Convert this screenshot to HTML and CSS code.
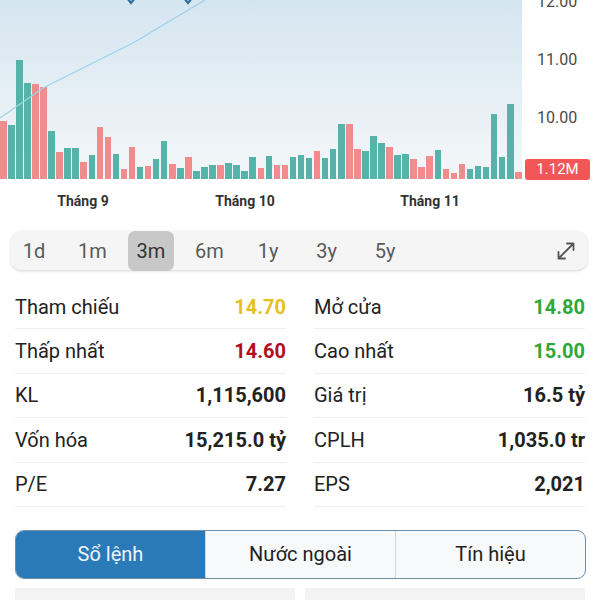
FILE: index.html
```html
<!DOCTYPE html>
<html lang="vi">
<head>
<meta charset="UTF-8">
<meta name="viewport" content="width=device-width, initial-scale=1.0">
<title>Chi tiết cổ phiếu</title>
<link rel="stylesheet" href="styles.css">
</head>
<body>

<div id="chart">
    <div class="chart-row">
        <div class="plot">
            <div class="bars" id="bars"></div>
            <svg class="overlay" width="522" height="179" viewBox="0 0 522 179">
                <polyline class="ma-line" points="0,118 43,88 133,43 205,0"/>
                <path class="price-line" d="M127 -2 L131 3 L135 -2 M184 -2 L188 3 L192 -2"/>
            </svg>
        </div>
        <div class="y-axis">
            <span class="tick first">12.00</span>
            <span class="tick">11.00</span>
            <span class="tick">10.00</span>
            <span class="vol-tag">1.12M</span>
        </div>
    </div>
    <div class="x-axis">
        <span class="month m9">Tháng 9</span>
        <span class="month m10">Tháng 10</span>
        <span class="month m11">Tháng 11</span>
    </div>
</div>

<div class="periods">
    <span class="period">1d</span>
    <span class="period">1m</span>
    <span class="period active">3m</span>
    <span class="period">6m</span>
    <span class="period">1y</span>
    <span class="period">3y</span>
    <span class="period">5y</span>
    <svg class="expand" width="24" height="24" viewBox="0 0 24 24" fill="none" stroke="#555" stroke-width="1.8" stroke-linecap="round" stroke-linejoin="round">
        <path d="M4.5 19.5 L19.5 4.5 M13 4.5 H19.5 V11 M4.5 13 V19.5 H11"/>
    </svg>
</div>

<div class="stats">
    <div class="stat"><span>Tham chiếu</span><b class="ref">14.70</b></div>
    <div class="stat"><span>Mở cửa</span><b class="up">14.80</b></div>
    <div class="stat"><span>Thấp nhất</span><b class="down">14.60</b></div>
    <div class="stat"><span>Cao nhất</span><b class="up">15.00</b></div>
    <div class="stat"><span>KL</span><b>1,115,600</b></div>
    <div class="stat"><span>Giá trị</span><b>16.5 tỷ</b></div>
    <div class="stat"><span>Vốn hóa</span><b>15,215.0 tỷ</b></div>
    <div class="stat"><span>CPLH</span><b>1,035.0 tr</b></div>
    <div class="stat"><span>P/E</span><b>7.27</b></div>
    <div class="stat"><span>EPS</span><b>2,021</b></div>
</div>

<div class="tabs">
    <div class="tab active">Sổ lệnh</div>
    <div class="tab">Nước ngoài</div>
    <div class="tab">Tín hiệu</div>
</div>

<div class="book">
    <div></div>
    <div></div>
</div>

<script>
    // top of each volume bar (px from chart top) and its colour
    var volumes = [
        [121,'d'],[125,'u'],[60,'u'],[83,'u'],[84,'d'],[87,'d'],[131,'u'],[152,'d'],
        [148,'u'],[148,'u'],[162,'d'],[155,'u'],[127,'d'],[137,'d'],[154,'u'],[169,'d'],
        [147,'d'],[167,'u'],[166,'d'],[159,'u'],[141,'u'],[164,'d'],[168,'u'],[157,'d'],
        [171,'u'],[167,'u'],[165,'u'],[165,'d'],[163,'u'],[165,'u'],[171,'u'],[157,'u'],
        [168,'d'],[156,'u'],[165,'d'],[165,'d'],[157,'u'],[155,'u'],[158,'u'],[151,'d'],
        [158,'u'],[149,'u'],[124,'u'],[124,'d'],[149,'d'],[151,'u'],[136,'u'],[143,'u'],
        [147,'d'],[155,'u'],[154,'u'],[159,'d'],[167,'d'],[156,'d'],[150,'u'],[169,'d'],
        [173,'d'],[164,'d'],[169,'u'],[166,'u'],[167,'u'],[114,'u'],[157,'u'],[104,'u'],
        [172,'d']
    ];

    var bars = document.getElementById("bars");
    volumes.forEach(function(v) {
        var bar = document.createElement("div");
        bar.className = "bar " + (v[1] === 'u' ? "up" : "down");
        bar.style.height = (179 - v[0]) + "px";
        bars.appendChild(bar);
    });
</script>

</body>
</html>
```

FILE: styles.css
```css
body {
    font-family: Roboto, "Noto Sans", sans-serif;
    background-color: #FFFFFF;
    color: #222;
    margin: 0;
}

/* chart */
.chart-row {
    display: flex;
    height: 180px;
    overflow: hidden;
}
.plot {
    position: relative;
    width: 522px;
    height: 179px;
    background: linear-gradient(#d5e5f0, #f4f7f9);
}
.bars {
    display: flex;
    align-items: flex-end;
    gap: 1.5px;
    height: 100%;
}
.bar {
    flex: 1;
}
.bar.up {
    background-color: #56b3a9;
}
.bar.down {
    background-color: #f08c8c;
}
.overlay {
    position: absolute;
    left: 0;
    top: 0;
}
.ma-line {
    fill: none;
    stroke: #9fd2ea;
    stroke-width: 1.3;
}
.price-line {
    fill: none;
    stroke: #2b6ea6;
    stroke-width: 2.2;
}
.y-axis {
    display: flex;
    flex-direction: column;
    align-items: flex-start;
    flex: 1;
}
.tick {
    font-size: 16px;
    line-height: 58px;
    color: #4a4a4a;
    padding-left: 15px;
}
.tick.first {
    margin-top: -27px;
}
.vol-tag {
    margin: 12px 0 0 3px;
    width: 65px;
    height: 21px;
    line-height: 21px;
    text-align: center;
    font-size: 15px;
    color: #fff;
    background-color: #f25656;
    border-radius: 3px;
}
.x-axis {
    position: relative;
    height: 51px;
}
.month {
    position: absolute;
    top: 11px;
    transform: translateX(-50%);
    font-size: 14px;
    line-height: 20px;
    font-weight: bold;
    color: #333;
}
.m9 { left: 83px; }
.m10 { left: 245px; }
.m11 { left: 430px; }

/* period switch */
.periods {
    display: flex;
    align-items: center;
    gap: 12.5px;
    height: 39px;
    margin: 0 13px 0 11px;
    background-color: #f5f5f5;
    border-radius: 10px;
    box-shadow: 0 1px 3px rgba(0, 0, 0, 0.18);
}
.period {
    display: flex;
    align-items: center;
    justify-content: center;
    width: 46px;
    height: 40px;
    font-size: 20px;
    color: #5a5a5a;
    border-radius: 7px;
}
.period.active {
    background-color: #c8c8c8;
    color: #333;
}
.expand {
    margin-left: auto;
    margin-right: 9px;
}

/* stats */
.stats {
    display: grid;
    grid-template-columns: 1fr 1fr;
    column-gap: 28px;
    padding: 0 15px;
    margin-top: 15px;
}
.stat {
    display: flex;
    justify-content: space-between;
    align-items: center;
    height: 44.4px;
    box-sizing: border-box;
    border-bottom: 1px solid #efefef;
    font-size: 20px;
}
.stat b {
    color: #222;
}
.stat b.ref {
    color: #e6c020;
}
.stat b.up {
    color: #2fa83a;
}
.stat b.down {
    color: #b0101e;
}

/* tabs */
.tabs {
    display: flex;
    height: 49px;
    margin: 23px 14px 0 15px;
    box-sizing: border-box;
    border: 1px solid #6f8ea8;
    border-radius: 9px;
    overflow: hidden;
    background-color: #f7f9fb;
}
.tab {
    flex: 1;
    display: flex;
    align-items: center;
    justify-content: center;
    font-size: 20px;
    color: #222;
    border-left: 1px solid #cfd6dc;
}
.tab:first-child {
    border-left: none;
}
.tab.active {
    background-color: #2a7ab8;
    color: #eef6fc;
}

.book {
    display: grid;
    grid-template-columns: 1fr 1fr;
    gap: 10px;
    padding: 0 15px;
    margin-top: 9px;
}
.book div {
    height: 30px;
    background-color: #f3f3f3;
}
```
